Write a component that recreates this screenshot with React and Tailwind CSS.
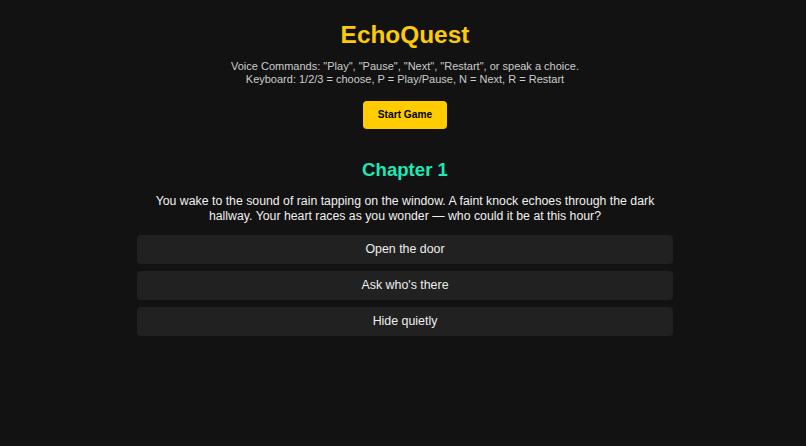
export default function App() {
  const choices = ["Open the door", "Ask who's there", "Hide quietly"];
  return (
    <div className="min-h-[446px] w-full bg-[#121212] pl-[4px] text-white" style={{ fontFamily: '"Liberation Sans", Arial, sans-serif' }}>
      <div className="mx-auto flex w-[536px] flex-col items-center pt-[21px]">
        <h1 className="text-[24.4px] font-bold leading-[28px] text-[#fccb06]">EchoQuest</h1>
        <div className="mt-[11px] text-center text-[11px] leading-[13px] text-[#cccccc]">
          <p>Voice Commands: "Play", "Pause", "Next", "Restart", or speak a choice.</p>
          <p>Keyboard: 1/2/3 = choose, P = Play/Pause, N = Next, R = Restart</p>
        </div>
        <button className="mt-[15px] h-[28px] w-[84px] rounded-[4px] bg-[#ffcc00] text-[10.2px] font-bold text-black">Start Game</button>
        <h2 className="mt-[30px] text-[18.6px] font-bold leading-[22px] text-[#1de9b6]">Chapter 1</h2>
        <p className="mt-[13px] w-[512px] text-center text-[12.3px] leading-[15px] text-[#f0f0f0]">
          You wake to the sound of rain tapping on the window. A faint knock echoes through the dark hallway. Your heart races as you wonder — who could it be at this hour?
        </p>
        <div className="mt-[11px] flex w-full flex-col gap-[7px]">
          {choices.map((c) => (
            <button key={c} className="h-[29px] w-full rounded-[4px] bg-[#212121] text-[12.4px] text-[#eeeeee]">{c}</button>
          ))}
        </div>
      </div>
    </div>
  );
}
